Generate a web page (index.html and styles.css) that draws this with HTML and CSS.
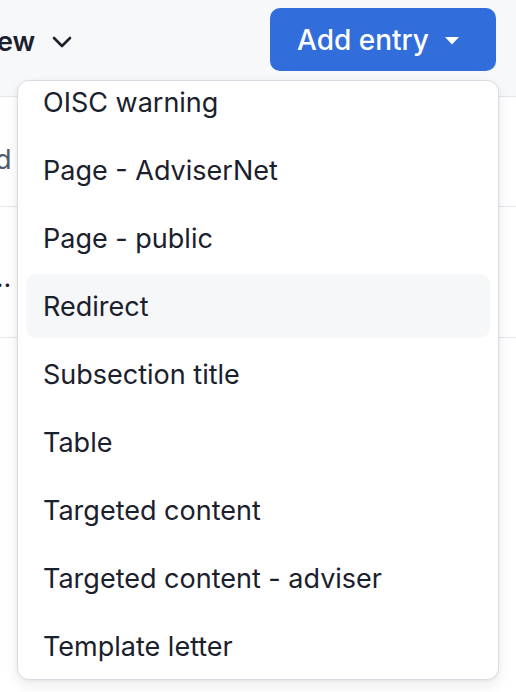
FILE: index.html
```html
<!DOCTYPE html>
<html lang="en">
<head>
<meta charset="utf-8">
<title>Add entry</title>
<link rel="stylesheet" href="styles.css">
</head>
<body>
<div class="page">
  <header class="topbar">
    <div class="view-toggle">
      <span class="view-label">ew</span>
      <svg class="chev" width="20" height="12" viewBox="0 0 20 12"><path d="M2 2 L10 10 L18 2" fill="none" stroke="#1a202c" stroke-width="2.6" stroke-linecap="round" stroke-linejoin="round"/></svg>
    </div>
    <button class="add-btn">
      <span>Add entry</span>
      <svg class="caret" width="14" height="8" viewBox="0 0 14 8"><path d="M0 0 H14 L7 7.5 Z" fill="#fff"/></svg>
    </button>
  </header>
  <div class="row row-1"><span class="cell-text muted">d</span></div>
  <div class="row row-2"><span class="cell-text dots">...</span></div>
  <div class="row row-3"></div>

  <div class="menu">
    <ul class="menu-list">
      <li class="menu-item">OISC warning</li>
      <li class="menu-item">Page - AdviserNet</li>
      <li class="menu-item">Page - public</li>
      <li class="menu-item is-hover">Redirect</li>
      <li class="menu-item">Subsection title</li>
      <li class="menu-item">Table</li>
      <li class="menu-item">Targeted content</li>
      <li class="menu-item">Targeted content - adviser</li>
      <li class="menu-item">Template letter</li>
    </ul>
  </div>
</div>
</body>
</html>
```

FILE: styles.css
```css
* { box-sizing: border-box; }
html, body { margin: 0; padding: 0; }
body {
  background: #ffffff;
  font-family: Inter, "Noto Sans", "Liberation Sans", sans-serif;
  color: #1a202c;
  width: 516px;
  height: 692px;
  overflow: hidden;
}
.page { position: relative; width: 516px; height: 692px; }

.topbar {
  height: 97px;
  background: #f7f8fa;
  border-bottom: 1px solid #e3e6eb;
  display: flex;
  justify-content: space-between;
  align-items: flex-start;
  padding: 8px 20px 0 0;
}
.view-toggle {
  display: flex;
  align-items: center;
  gap: 17px;
  height: 66px;
  margin-left: -3px;
}
.view-label {
  font-size: 27px;
  font-weight: 600;
  color: #1a202c;
}
.chev { display: block; margin-top: 2px; }

.add-btn {
  width: 226px;
  height: 63px;
  border: none;
  border-radius: 10px;
  background: #316ddb;
  color: #fff;
  font-family: inherit;
  font-size: 28px;
  font-weight: 500;
  display: flex;
  align-items: center;
  justify-content: space-between;
  padding: 0 37px 0 27px;
}
.caret { display: block; margin-top: 2px; }

.row {
  border-bottom: 1px solid #e3e6eb;
  display: flex;
  align-items: center;
}
.row-1 { height: 110px; }
.row-2 { height: 131px; }
.row-3 { height: 200px; border-bottom: none; }
.cell-text { font-size: 27px; }
.muted { color: #505a6c; margin-left: -5px; margin-top: 16px; }
.dots { color: #1a202c; margin-left: -12px; margin-top: 10px; }

.menu {
  position: absolute;
  left: 17px;
  top: 80px;
  width: 482px;
  height: 600px;
  background: #fff;
  border: 1px solid #d9dce2;
  border-radius: 12px;
  box-shadow: 0 6px 14px rgba(20, 30, 50, 0.08), 0 1px 3px rgba(20, 30, 50, 0.06);
  overflow: hidden;
}
.menu-list {
  list-style: none;
  margin: -11px 0 0 0;
  padding: 0 8px;
  display: flex;
  flex-direction: column;
  gap: 4px;
}
.menu-item {
  height: 64px;
  display: flex;
  align-items: center;
  padding-left: 17px;
  border-radius: 10px;
  font-size: 27px;
  color: #1a202c;
}
.menu-item.is-hover { background: #f6f7f9; }
```
